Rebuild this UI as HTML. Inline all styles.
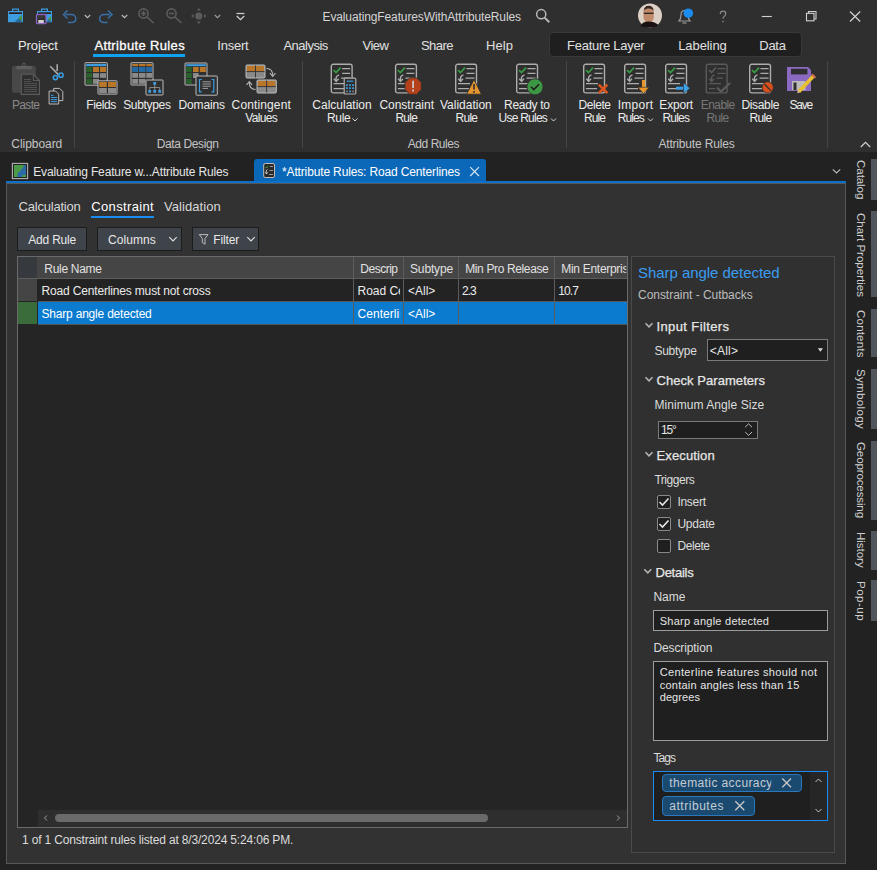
<!DOCTYPE html>
<html><head><meta charset="utf-8">
<style>
html,body{margin:0;padding:0;}
body{width:877px;height:870px;overflow:hidden;position:relative;background:#222222;font-family:"Liberation Sans",sans-serif;}
.t{position:absolute;white-space:pre;line-height:1;font-family:"Liberation Sans",sans-serif;}
.b{position:absolute;box-sizing:border-box;}
svg{position:absolute;overflow:visible;}
</style></head><body>
<!-- title bar + ribbon -->
<div class="b" style="left:0;top:0;width:877px;height:152px;background:#2f2f2f;"></div>
<!-- contextual tab box -->
<div class="b" style="left:549px;top:32px;width:253px;height:25px;background:#1f1f1f;border:1px solid #383838;border-radius:4px;"></div>
<!-- Attribute rules underline -->
<div class="b" style="left:93px;top:54px;width:92px;height:3px;background:#0ea2f0;"></div>
<!-- ribbon separators -->
<div class="b" style="left:74px;top:61px;width:1px;height:87px;background:#454545;"></div>
<div class="b" style="left:302px;top:61px;width:1px;height:87px;background:#454545;"></div>
<div class="b" style="left:566px;top:61px;width:1px;height:87px;background:#454545;"></div>
<div class="b" style="left:827px;top:61px;width:1px;height:87px;background:#454545;"></div>

<!-- doc tabs -->
<div class="b" style="left:254px;top:159px;width:232px;height:23px;background:#0b68b8;border-radius:3px 3px 0 0;"></div>
<div class="b" style="left:6px;top:181px;width:840px;height:2px;background:#0a72cc;"></div>
<!-- pane -->
<div class="b" style="left:6px;top:183px;width:840px;height:681px;background:#323232;border:1px solid #585858;"></div>

<!-- subtab underline -->
<div class="b" style="left:91px;top:216px;width:63px;height:2px;background:#1a8cf0;"></div>
<!-- buttons -->
<div class="b" style="left:17px;top:227px;width:70px;height:24px;background:#3f434a;border:1px solid #1c1c1c;"></div>
<div class="b" style="left:97px;top:227px;width:85px;height:24px;background:#3f434a;border:1px solid #1c1c1c;"></div>
<div class="b" style="left:192px;top:227px;width:67px;height:24px;background:#3f434a;border:1px solid #1c1c1c;"></div>

<!-- table -->
<div class="b" style="left:17px;top:256px;width:611px;height:572px;background:#252525;border:1px solid #6a6a6a;"></div>
<div class="b" style="left:18px;top:257px;width:609px;height:22px;background:#454545;border-bottom:1px solid #5c5c5c;"></div>
<div class="b" style="left:18px;top:257px;width:19px;height:21px;background:#363a3f;"></div>
<div class="b" style="left:353px;top:257px;width:1px;height:21px;background:#5c5c5c;"></div>
<div class="b" style="left:403px;top:257px;width:1px;height:21px;background:#5c5c5c;"></div>
<div class="b" style="left:458px;top:257px;width:1px;height:21px;background:#5c5c5c;"></div>
<div class="b" style="left:554px;top:257px;width:1px;height:21px;background:#5c5c5c;"></div>
<!-- row1 -->
<div class="b" style="left:18px;top:279px;width:19px;height:22px;background:#454545;"></div>
<div class="b" style="left:38px;top:279px;width:589px;height:22px;background:#232323;"></div>
<!-- row2 -->
<div class="b" style="left:18px;top:302px;width:19px;height:22px;background:#3a6b3a;"></div>
<div class="b" style="left:38px;top:301px;width:589px;height:1px;background:#555555;"></div>
<div class="b" style="left:38px;top:302px;width:589px;height:22px;background:#0a7bcf;"></div>
<div class="b" style="left:38px;top:324px;width:589px;height:1px;background:#555555;"></div>
<!-- cell separators -->
<div class="b" style="left:353px;top:279px;width:1px;height:46px;background:#5c5c5c;"></div>
<div class="b" style="left:403px;top:279px;width:1px;height:46px;background:#5c5c5c;"></div>
<div class="b" style="left:458px;top:279px;width:1px;height:46px;background:#5c5c5c;"></div>
<div class="b" style="left:554px;top:279px;width:1px;height:46px;background:#5c5c5c;"></div>
<!-- h scrollbar -->
<div class="b" style="left:38px;top:810px;width:589px;height:17px;background:#2e2e2e;"></div>
<div class="b" style="left:55px;top:814px;width:433px;height:8px;background:#6a6a6a;border-radius:4px;"></div>

<!-- right panel -->
<div class="b" style="left:631px;top:256px;width:204px;height:597px;background:#303030;border:1px solid #4a4a4a;"></div>
<!-- combo -->
<div class="b" style="left:707px;top:339px;width:121px;height:22px;background:#1f1f1f;border:1px solid #7a7a7a;"></div>
<!-- 15 box -->
<div class="b" style="left:658px;top:421px;width:100px;height:18px;background:#1f1f1f;border:1px solid #7a7a7a;"></div>
<!-- checkboxes -->
<div class="b" style="left:657px;top:495px;width:14px;height:14px;background:#1f1f1f;border:1px solid #8a8a8a;border-radius:2px;"></div>
<div class="b" style="left:657px;top:517px;width:14px;height:14px;background:#1f1f1f;border:1px solid #8a8a8a;border-radius:2px;"></div>
<div class="b" style="left:657px;top:539px;width:14px;height:14px;background:#1f1f1f;border:1px solid #8a8a8a;border-radius:2px;"></div>
<!-- name / desc -->
<div class="b" style="left:653px;top:610px;width:175px;height:21px;background:#1f1f1f;border:1px solid #9c9c9c;"></div>
<div class="b" style="left:653px;top:661px;width:175px;height:80px;background:#1f1f1f;border:1px solid #9c9c9c;"></div>
<!-- tags -->
<div class="b" style="left:653px;top:771px;width:175px;height:50px;background:#1f1f1f;border:1px solid #1a8cf0;"></div>
<div class="b" style="left:810px;top:772px;width:17px;height:48px;background:#262626;"></div>
<div class="b" style="left:662px;top:774px;width:140px;height:18px;background:#1b4a70;border:1px solid #2a78c0;border-radius:4px;"></div>
<div class="b" style="left:662px;top:796px;width:93px;height:20px;background:#1b4a70;border:1px solid #2a78c0;border-radius:4px;"></div>

<!-- sidebar bars -->
<div class="b" style="left:871px;top:159px;width:6px;height:41px;background:#51555c;"></div>
<div class="b" style="left:871px;top:211px;width:6px;height:86px;background:#51555c;"></div>
<div class="b" style="left:871px;top:309px;width:6px;height:48px;background:#51555c;"></div>
<div class="b" style="left:871px;top:369px;width:6px;height:60px;background:#51555c;"></div>
<div class="b" style="left:871px;top:441px;width:6px;height:79px;background:#51555c;"></div>
<div class="b" style="left:871px;top:531px;width:6px;height:39px;background:#51555c;"></div>
<div class="b" style="left:871px;top:580px;width:6px;height:41px;background:#51555c;"></div>

<div class="t" style="left:322.5px;top:11.14px;font-size:12px;letter-spacing:-0.122px;color:#d4d4d4;">EvaluatingFeaturesWithAttributeRules</div>
<div class="t" style="left:18.0px;top:38.60px;font-size:13px;letter-spacing:-0.111px;color:#e8e8e8;">Project</div>
<div class="t" style="left:94.4px;top:38.60px;font-size:13px;letter-spacing:0.360px;color:#ffffff;-webkit-text-stroke:0.3px #ffffff;">Attribute Rules</div>
<div class="t" style="left:217.3px;top:38.60px;font-size:13px;letter-spacing:-0.243px;color:#e0e0e0;">Insert</div>
<div class="t" style="left:283.4px;top:38.60px;font-size:13px;letter-spacing:-0.489px;color:#e0e0e0;">Analysis</div>
<div class="t" style="left:362.5px;top:38.60px;font-size:13px;letter-spacing:-0.484px;color:#e0e0e0;">View</div>
<div class="t" style="left:421.0px;top:38.60px;font-size:13px;letter-spacing:-0.551px;color:#e0e0e0;">Share</div>
<div class="t" style="left:486.0px;top:38.60px;font-size:13px;letter-spacing:0.083px;color:#e0e0e0;">Help</div>
<div class="t" style="left:567.1px;top:38.60px;font-size:13px;letter-spacing:-0.278px;color:#e0e0e0;">Feature Layer</div>
<div class="t" style="left:678.2px;top:38.60px;font-size:13px;letter-spacing:-0.079px;color:#e0e0e0;">Labeling</div>
<div class="t" style="left:759.3px;top:38.60px;font-size:13px;letter-spacing:-0.290px;color:#e0e0e0;">Data</div>
<div class="t" style="left:12.0px;top:99.14px;font-size:12px;letter-spacing:-0.672px;color:#8a8a8a;">Paste</div>
<div class="t" style="left:86.2px;top:99.14px;font-size:12px;letter-spacing:-0.383px;color:#ececec;">Fields</div>
<div class="t" style="left:123.2px;top:99.14px;font-size:12px;letter-spacing:-0.321px;color:#ececec;">Subtypes</div>
<div class="t" style="left:178.6px;top:99.14px;font-size:12px;letter-spacing:-0.160px;color:#ececec;">Domains</div>
<div class="t" style="left:231.6px;top:99.14px;font-size:12px;letter-spacing:0.128px;color:#ececec;">Contingent</div>
<div class="t" style="left:245.3px;top:111.64px;font-size:12px;letter-spacing:-0.662px;color:#ececec;">Values</div>
<div class="t" style="left:312.3px;top:99.14px;font-size:12px;letter-spacing:0.002px;color:#ececec;">Calculation</div>
<div class="t" style="left:327.0px;top:111.64px;font-size:12px;letter-spacing:-0.296px;color:#ececec;">Rule</div>
<div class="t" style="left:379.4px;top:99.14px;font-size:12px;letter-spacing:-0.011px;color:#ececec;">Constraint</div>
<div class="t" style="left:395.4px;top:111.64px;font-size:12px;letter-spacing:-0.696px;color:#ececec;">Rule</div>
<div class="t" style="left:440.0px;top:99.14px;font-size:12px;letter-spacing:-0.003px;color:#ececec;">Validation</div>
<div class="t" style="left:455.5px;top:111.64px;font-size:12px;letter-spacing:-0.729px;color:#ececec;">Rule</div>
<div class="t" style="left:504.0px;top:99.14px;font-size:12px;letter-spacing:-0.290px;color:#ececec;">Ready to</div>
<div class="t" style="left:498.6px;top:111.64px;font-size:12px;letter-spacing:-0.770px;color:#ececec;">Use Rules</div>
<div class="t" style="left:578.6px;top:99.14px;font-size:12px;letter-spacing:-0.458px;color:#ececec;">Delete</div>
<div class="t" style="left:583.9px;top:111.64px;font-size:12px;letter-spacing:-0.862px;color:#ececec;">Rule</div>
<div class="t" style="left:617.7px;top:99.14px;font-size:12px;letter-spacing:0.277px;color:#ececec;">Import</div>
<div class="t" style="left:617.7px;top:111.64px;font-size:12px;letter-spacing:-0.897px;color:#ececec;">Rules</div>
<div class="t" style="left:659.3px;top:99.14px;font-size:12px;letter-spacing:-0.158px;color:#ececec;">Export</div>
<div class="t" style="left:662.4px;top:111.64px;font-size:12px;letter-spacing:-0.772px;color:#ececec;">Rules</div>
<div class="t" style="left:700.8px;top:99.14px;font-size:12px;letter-spacing:-0.575px;color:#777777;">Enable</div>
<div class="t" style="left:706.4px;top:111.64px;font-size:12px;letter-spacing:-0.629px;color:#777777;">Rule</div>
<div class="t" style="left:741.5px;top:99.14px;font-size:12px;letter-spacing:-0.355px;color:#ececec;">Disable</div>
<div class="t" style="left:749.5px;top:111.64px;font-size:12px;letter-spacing:-0.629px;color:#ececec;">Rule</div>
<div class="t" style="left:789.5px;top:99.14px;font-size:12px;letter-spacing:-1.220px;color:#ececec;">Save</div>
<div class="t" style="left:11.3px;top:138.14px;font-size:12px;letter-spacing:-0.047px;color:#c4c4c4;">Clipboard</div>
<div class="t" style="left:156.7px;top:138.14px;font-size:12px;letter-spacing:-0.375px;color:#c4c4c4;">Data Design</div>
<div class="t" style="left:407.8px;top:138.14px;font-size:12px;letter-spacing:-0.459px;color:#c4c4c4;">Add Rules</div>
<div class="t" style="left:658.4px;top:138.14px;font-size:12px;letter-spacing:-0.172px;color:#c4c4c4;">Attribute Rules</div>
<div class="t" style="left:33.2px;top:165.54px;font-size:12px;letter-spacing:-0.148px;color:#e6e6e6;">Evaluating Feature w...Attribute Rules</div>
<div class="t" style="left:282.0px;top:165.54px;font-size:12px;letter-spacing:-0.144px;color:#ffffff;">*Attribute Rules: Road Centerlines</div>
<div class="t" style="left:18.6px;top:200.00px;font-size:13px;letter-spacing:-0.223px;color:#d8d8d8;">Calculation</div>
<div class="t" style="left:91.3px;top:200.00px;font-size:13px;letter-spacing:0.350px;color:#ffffff;">Constraint</div>
<div class="t" style="left:164.0px;top:200.00px;font-size:13px;letter-spacing:0.073px;color:#d8d8d8;">Validation</div>
<div class="t" style="left:28.3px;top:233.64px;font-size:12px;letter-spacing:-0.211px;color:#e8e8e8;">Add Rule</div>
<div class="t" style="left:108.0px;top:233.84px;font-size:12px;letter-spacing:0.073px;color:#e8e8e8;">Columns</div>
<div class="t" style="left:213.2px;top:233.84px;font-size:12px;letter-spacing:-0.134px;color:#e8e8e8;">Filter</div>
<div class="t" style="left:44.3px;top:262.84px;font-size:12px;letter-spacing:-0.291px;color:#e0e0e0;">Rule Name</div>
<div class="t" style="left:360.3px;top:262.84px;font-size:12px;letter-spacing:-0.498px;color:#e0e0e0;">Descrip</div>
<div class="t" style="left:410.0px;top:262.84px;font-size:12px;letter-spacing:-0.141px;color:#e0e0e0;">Subtype</div>
<div class="t" style="left:465.2px;top:262.84px;font-size:12px;letter-spacing:-0.366px;color:#e0e0e0;">Min Pro Release</div>
<div class="t" style="left:561.3px;top:262.84px;font-size:12px;letter-spacing:-0.298px;color:#e0e0e0;clip-path:inset(-5px calc(100% - 65px) -5px -5px);">Min Enterprise</div>
<div class="t" style="left:41.5px;top:285.04px;font-size:12px;letter-spacing:-0.163px;color:#ececec;">Road Centerlines must not cross</div>
<div class="t" style="left:357.6px;top:285.04px;font-size:12px;letter-spacing:-0.048px;color:#ececec;clip-path:inset(-5px calc(100% - 42.5px) -5px -5px);">Road Centerlines</div>
<div class="t" style="left:407.9px;top:285.04px;font-size:12px;letter-spacing:0.035px;color:#ececec;">&lt;All&gt;</div>
<div class="t" style="left:462.0px;top:285.04px;font-size:12px;letter-spacing:-0.944px;color:#ececec;">2.3</div>
<div class="t" style="left:558.2px;top:285.04px;font-size:12px;letter-spacing:-0.853px;color:#ececec;">10.7</div>
<div class="t" style="left:41.5px;top:307.84px;font-size:12px;letter-spacing:-0.200px;color:#ffffff;">Sharp angle detected</div>
<div class="t" style="left:357.6px;top:307.84px;font-size:12px;letter-spacing:0.033px;color:#ffffff;clip-path:inset(-5px calc(100% - 42.5px) -5px -5px);">Centerline</div>
<div class="t" style="left:407.9px;top:307.84px;font-size:12px;letter-spacing:0.035px;color:#ffffff;">&lt;All&gt;</div>
<div class="t" style="left:22.0px;top:834.44px;font-size:12px;letter-spacing:-0.166px;color:#dcdcdc;">1 of 1 Constraint rules listed at 8/3/2024 5:24:06 PM.</div>
<div class="t" style="left:638.0px;top:265.20px;font-size:15px;letter-spacing:-0.049px;color:#3a9cf0;">Sharp angle detected</div>
<div class="t" style="left:638.0px;top:289.34px;font-size:12px;letter-spacing:-0.035px;color:#bdbdbd;">Constraint - Cutbacks</div>
<div class="t" style="left:656.5px;top:320.40px;font-size:13px;letter-spacing:0.382px;color:#e6e6e6;-webkit-text-stroke:0.25px #e6e6e6;">Input Filters</div>
<div class="t" style="left:654.4px;top:345.14px;font-size:12px;letter-spacing:-0.241px;color:#dcdcdc;">Subtype</div>
<div class="t" style="left:709.7px;top:345.14px;font-size:12px;letter-spacing:0.235px;color:#e6e6e6;">&lt;All&gt;</div>
<div class="t" style="left:656.5px;top:374.00px;font-size:13px;letter-spacing:0.056px;color:#e6e6e6;-webkit-text-stroke:0.25px #e6e6e6;">Check Parameters</div>
<div class="t" style="left:654.4px;top:398.84px;font-size:12px;letter-spacing:0.069px;color:#dcdcdc;">Minimum Angle Size</div>
<div class="t" style="left:661.0px;top:424.34px;font-size:12px;letter-spacing:-1.178px;color:#e6e6e6;">15°</div>
<div class="t" style="left:656.5px;top:449.00px;font-size:13px;letter-spacing:0.138px;color:#e6e6e6;-webkit-text-stroke:0.25px #e6e6e6;">Execution</div>
<div class="t" style="left:654.4px;top:474.24px;font-size:12px;letter-spacing:-0.468px;color:#dcdcdc;">Triggers</div>
<div class="t" style="left:677.4px;top:495.84px;font-size:12px;letter-spacing:-0.283px;color:#dcdcdc;">Insert</div>
<div class="t" style="left:677.4px;top:518.04px;font-size:12px;letter-spacing:-0.221px;color:#dcdcdc;">Update</div>
<div class="t" style="left:677.4px;top:539.94px;font-size:12px;letter-spacing:-0.417px;color:#dcdcdc;">Delete</div>
<div class="t" style="left:655.5px;top:566.00px;font-size:13px;letter-spacing:-0.258px;color:#e6e6e6;-webkit-text-stroke:0.25px #e6e6e6;">Details</div>
<div class="t" style="left:653.4px;top:591.14px;font-size:12px;letter-spacing:0.028px;color:#dcdcdc;">Name</div>
<div class="t" style="left:659.7px;top:615.89px;font-size:11px;letter-spacing:0.248px;color:#e6e6e6;">Sharp angle detected</div>
<div class="t" style="left:653.4px;top:641.54px;font-size:12px;letter-spacing:-0.103px;color:#dcdcdc;">Description</div>
<div class="t" style="left:659.7px;top:666.59px;font-size:11px;letter-spacing:0.363px;color:#e6e6e6;">Centerline features should not</div>
<div class="t" style="left:659.7px;top:679.69px;font-size:11px;letter-spacing:0.241px;color:#e6e6e6;">contain angles less than 15</div>
<div class="t" style="left:659.7px;top:692.09px;font-size:11px;letter-spacing:0.089px;color:#e6e6e6;">degrees</div>
<div class="t" style="left:653.4px;top:751.84px;font-size:12px;letter-spacing:-0.953px;color:#dcdcdc;">Tags</div>
<div class="t" style="left:669.3px;top:776.84px;font-size:12px;letter-spacing:0.394px;color:#c4ccd4;clip-path:inset(-5px calc(100% - 102px) -5px -5px);">thematic accuracy</div>
<div class="t" style="left:669.3px;top:799.84px;font-size:12px;letter-spacing:0.527px;color:#c4ccd4;">attributes</div>
<div class="t" style="left:866.6px;top:160.00px;font-size:11.6px;letter-spacing:-0.095px;color:#cfcfcf;transform:rotate(90deg);transform-origin:0 0;">Catalog</div>
<div class="t" style="left:866.6px;top:212.60px;font-size:11.6px;letter-spacing:-0.028px;color:#cfcfcf;transform:rotate(90deg);transform-origin:0 0;">Chart Properties</div>
<div class="t" style="left:866.6px;top:309.50px;font-size:11.6px;letter-spacing:0.156px;color:#cfcfcf;transform:rotate(90deg);transform-origin:0 0;">Contents</div>
<div class="t" style="left:866.6px;top:369.30px;font-size:11.6px;letter-spacing:0.293px;color:#cfcfcf;transform:rotate(90deg);transform-origin:0 0;">Symbology</div>
<div class="t" style="left:866.6px;top:442.20px;font-size:11.6px;letter-spacing:-0.157px;color:#cfcfcf;transform:rotate(90deg);transform-origin:0 0;">Geoprocessing</div>
<div class="t" style="left:866.6px;top:532.30px;font-size:11.6px;letter-spacing:-0.063px;color:#cfcfcf;transform:rotate(90deg);transform-origin:0 0;">History</div>
<div class="t" style="left:866.6px;top:581.00px;font-size:11.6px;letter-spacing:0.462px;color:#cfcfcf;transform:rotate(90deg);transform-origin:0 0;">Pop-up</div>
<svg width="877" height="870" style="left:0;top:0;" viewBox="0 0 877 870" fill="none" stroke-linecap="butt">
<defs>
  <g id="rdoc">
    <rect x="0.7" y="0.7" width="20.8" height="28.6" rx="2" stroke="#adadad" stroke-width="1.4"/>
    <polyline points="3,6.5 5.5,9 10,4" stroke="#3a9c44" stroke-width="1.7"/>
    <path d="M11.5,5H19.5M11.5,9.8H19.5M10.5,14.5H19.5M3,20H15M3,25H14" stroke="#adadad" stroke-width="1.3"/>
    <path d="M8.5,11.3C5.8,12 5,14.5 5.6,17.5" stroke="#adadad" stroke-width="1.4"/>
    <path d="M3.3,15.2L5.6,17.8L8,15.2" stroke="#adadad" stroke-width="1.4"/>
  </g>
</defs>
<!-- ===== title bar ===== -->
<!-- project icon -->
<g>
  <rect x="12.6" y="9.1" width="5.8" height="2.6" stroke="#3d9de0" stroke-width="1.2"/>
  <rect x="8" y="11" width="15" height="11.2" fill="#3d9de0"/>
  <rect x="9" y="12.3" width="13" height="1.7" fill="#2b1f1f"/>
  <path d="M14.5,22.2L21.8,15V22.2Z" fill="#2a6a9a"/>
  <path d="M18.5,18L21.8,15V21Z" fill="#4a9a3a"/>
</g>
<!-- save project icon -->
<g>
  <rect x="41.6" y="9.1" width="5.8" height="2.6" stroke="#3d9de0" stroke-width="1.2"/>
  <rect x="37" y="11" width="15" height="11.2" fill="#3d9de0"/>
  <rect x="38" y="12.3" width="13" height="1.7" fill="#2b1f1f"/>
  <path d="M46,22.2L51,17V22.2Z" fill="#2a6a9a"/>
  <path d="M48,19L51,16V21Z" fill="#4a9a3a"/>
  <rect x="36.5" y="14.5" width="9.5" height="9.2" rx="1" fill="#2f2f2f" stroke="#8a63c0" stroke-width="1.3"/>
  <rect x="38.3" y="20" width="5.5" height="3" fill="#d0d0d0"/>
  <rect x="38.5" y="15.8" width="5" height="2.5" fill="#3a3a3a"/>
</g>
<!-- undo -->
<path d="M65.5,14.5H71.5C74,14.5 75.8,16.3 75.8,18.6C75.8,21 74,22.6 71.5,22.6H68" stroke="#3a70a8" stroke-width="1.5"/>
<path d="M67.5,10.5L63.5,14.5L67.5,18.5" stroke="#3a70a8" stroke-width="1.5"/>
<path d="M84.8,15L87.5,17.7L90.2,15" stroke="#bdbdbd" stroke-width="1.1"/>
<!-- redo -->
<path d="M110,14.5H104C101.5,14.5 99.7,16.3 99.7,18.6C99.7,21 101.5,22.6 104,22.6H107.5" stroke="#3a70a8" stroke-width="1.5"/>
<path d="M108,10.5L112,14.5L108,18.5" stroke="#3a70a8" stroke-width="1.5"/>
<path d="M121.8,15L124.5,17.7L127.2,15" stroke="#bdbdbd" stroke-width="1.1"/>
<!-- zoom in -->
<circle cx="143.5" cy="13.5" r="4.6" stroke="#5c5c5c" stroke-width="1.6"/>
<path d="M141,13.5H146M143.5,11V16M147,17L153.5,23" stroke="#5c5c5c" stroke-width="1.7"/>
<!-- zoom out -->
<circle cx="171.5" cy="13.5" r="4.6" stroke="#5c5c5c" stroke-width="1.6"/>
<path d="M169,13.5H174M175,17L181.5,23" stroke="#5c5c5c" stroke-width="1.7"/>
<!-- pan -->
<circle cx="198.8" cy="16" r="3.6" fill="#5c5c5c"/>
<path d="M198.8,8L196.8,10.6H200.8ZM198.8,24L196.8,21.4H200.8ZM191,16L193.6,14V18ZM206.6,16L204,14V18Z" fill="#5c5c5c"/>
<path d="M214.8,15L217.5,17.7L220.2,15" stroke="#9a9a9a" stroke-width="1.1"/>
<!-- customize -->
<path d="M236.5,13.5H244.5" stroke="#d0d0d0" stroke-width="1.2"/>
<path d="M236.8,16L240.5,19.7L244.2,16" stroke="#d0d0d0" stroke-width="1.3"/>
<!-- search -->
<circle cx="541.2" cy="14.2" r="4.6" stroke="#b8b8b8" stroke-width="1.5"/>
<path d="M544.6,17.6L549.3,22.2" stroke="#b8b8b8" stroke-width="2"/>
<!-- avatar -->
<circle cx="650" cy="15.6" r="12" fill="#dcd0c6"/>
<path d="M643.5,12C643.5,8 646,6 648.6,6C651.5,6 653.8,8 653.8,12V17C653.8,20.5 651.5,22.5 648.6,22.5C646,22.5 643.5,20.5 643.5,17Z" fill="#c08a6c"/>
<path d="M643.8,10.5C644,7.5 646,5.8 648.6,5.8C651.3,5.8 653.5,7.5 653.6,10.5C652,9 650,8.6 648.6,8.6C647,8.6 645.3,9 643.8,10.5Z" fill="#3a2620"/>
<path d="M643.8,13.3H653.6" stroke="#2a2020" stroke-width="1.3"/>
<path d="M640.5,26C642,23 644.5,21.6 648.6,21.6C652.5,21.6 655.5,22.5 658.5,25.2C656,27 653.2,27.6 650,27.6C646.5,27.6 643.5,27.2 640.5,26Z" fill="#1a1212"/>
<!-- bell -->
<path d="M679,21C680.5,19.5 681,18 681,15C681,12 682.5,10.5 684.5,10.5C686.5,10.5 688,12 688,15C688,18 688.5,19.5 690,21Z" stroke="#9a9a9a" stroke-width="1.2"/>
<path d="M682.5,23H686.5" stroke="#9a9a9a" stroke-width="1.2"/>
<circle cx="688.3" cy="13.2" r="4.8" fill="#1a8cf0"/>
<!-- question -->
<path d="M720.3,14C720.3,12 721.7,11.2 723,11.2C724.5,11.2 725.8,12.2 725.8,13.8C725.8,16 723,16.2 723,18.8" stroke="#8a8a8a" stroke-width="1.2"/>
<circle cx="723" cy="21.6" r="0.8" fill="#8a8a8a"/>
<!-- min/restore/close -->
<path d="M761.8,16.5H771.8" stroke="#d0d0d0" stroke-width="1.1"/>
<rect x="806.5" y="13.3" width="7.5" height="7.5" stroke="#d0d0d0" stroke-width="1.1"/>
<path d="M808.5,13.3V11.5H816V19H814" stroke="#d0d0d0" stroke-width="1.1"/>
<path d="M850,11.5L860.2,21.5M860.2,11.5L850,21.5" stroke="#d0d0d0" stroke-width="1.2"/>

<!-- ===== ribbon ===== -->
<!-- paste -->
<g>
  <rect x="12" y="65.8" width="23.8" height="27" rx="2.5" fill="#484848"/>
  <rect x="16.1" y="66" width="15.9" height="3.2" rx="1.6" fill="#5e5e5e"/>
  <circle cx="23.9" cy="64.6" r="1.5" stroke="#5e5e5e" stroke-width="1"/>
  <path d="M21.3,74.3H33.3L39.5,80.5V94.4H21.3Z" fill="#2f2f2f" stroke="#5c5c5c" stroke-width="1.1"/>
  <path d="M33.3,74.3V80.5H39.5" stroke="#5c5c5c" stroke-width="1"/>
  <path d="M24,79.5H31M24,81.5H31M24,83.5H37M24,85.5H37M24,87.5H37M24,89.5H37M24,91.5H37" stroke="#5a5a5a" stroke-width="0.8"/>
</g>
<!-- scissors -->
<g>
  <path d="M50.2,66.2L58.4,74.6" stroke="#a8a8a8" stroke-width="1.6"/>
  <path d="M57.2,64.3V71" stroke="#a8a8a8" stroke-width="1.6"/>
  <circle cx="55.4" cy="77.6" r="2.1" stroke="#3a9de0" stroke-width="1.5"/>
  <circle cx="61" cy="75.2" r="2.1" stroke="#3a9de0" stroke-width="1.5"/>
</g>
<!-- copy -->
<g>
  <path d="M53.6,88.4H59.6L62.8,91.6V100.6H53.6Z" fill="#2f2f2f" stroke="#bcbcbc" stroke-width="1"/>
  <path d="M49.1,91H55.5L58.7,94.2V104H49.1Z" fill="#2f2f2f" stroke="#bcbcbc" stroke-width="1"/>
  <path d="M51,95.4H53.5M51,97.5H57M51,99.6H57M51,101.6H57" stroke="#3a9de0" stroke-width="1"/>
</g>
<!-- fields -->
<g>
  <rect x="85" y="62.7" width="22.3" height="22.5" rx="0.6" fill="#2f2f2f" stroke="#bcbcbc" stroke-width="1"/>
  <rect x="86.2" y="64" width="20" height="2.2" fill="#3d9de0"/>
  <rect x="86.2" y="67" width="6" height="5" fill="#2a602c"/>
  <rect x="93" y="67" width="6" height="5" fill="#b97528"/>
  <rect x="100" y="67" width="6" height="5" fill="#b97528"/>
  <rect x="86.2" y="73.2" width="6" height="4.6" fill="#2a602c"/>
  <rect x="93" y="73.2" width="6" height="4.6" fill="#8a8a8a"/>
  <rect x="100" y="73.2" width="6" height="4.6" fill="#8a8a8a"/>
  <rect x="86.2" y="79" width="6" height="4.8" fill="#2a602c"/>
  <rect x="93" y="79" width="6" height="4.8" fill="#8a8a8a"/>
  <rect x="98" y="80.8" width="19" height="13.3" rx="0.6" fill="#2f2f2f" stroke="#bcbcbc" stroke-width="1"/>
  <rect x="99.2" y="82" width="7.6" height="5" fill="#b97528"/>
  <rect x="108" y="82" width="8" height="5" fill="#b97528"/>
  <rect x="99.2" y="88" width="7.6" height="5" fill="#8a8a8a"/>
  <rect x="108" y="88" width="8" height="5" fill="#8a8a8a"/>
</g>
<!-- subtypes -->
<g>
  <rect x="131" y="62.7" width="22" height="22.3" rx="0.6" fill="#2f2f2f" stroke="#bcbcbc" stroke-width="1"/>
  <rect x="132.2" y="64" width="6" height="2.2" fill="#b97528"/>
  <rect x="139" y="64" width="6.5" height="2.2" fill="#b97528"/>
  <rect x="146.3" y="64" width="5.8" height="2.2" fill="#b97528"/>
  <rect x="132.2" y="67" width="6" height="5" fill="#236aa5"/>
  <rect x="139" y="67" width="6.5" height="5" fill="#236aa5"/>
  <rect x="146.3" y="67" width="5.8" height="5" fill="#236aa5"/>
  <rect x="132.2" y="73" width="6" height="4.8" fill="#8a8a8a"/>
  <rect x="139" y="73" width="6.5" height="4.8" fill="#8a8a8a"/>
  <rect x="146.3" y="73" width="5.8" height="4.8" fill="#8a8a8a"/>
  <rect x="132.2" y="79" width="6" height="4.8" fill="#8a8a8a"/>
  <rect x="139" y="79" width="6.5" height="4.8" fill="#8a8a8a"/>
  <rect x="146" y="80" width="17" height="15" rx="0.6" fill="#2f2f2f" stroke="#bcbcbc" stroke-width="1"/>
  <rect x="153.3" y="82" width="2.8" height="2.8" fill="#3d9de0"/>
  <path d="M154.7,84.8V87.5M149.7,90V87.5H159.7V90M154.7,87.5V90" stroke="#9a9a9a" stroke-width="0.8"/>
  <rect x="148.3" y="90" width="2.8" height="2.8" fill="#3d9de0"/>
  <rect x="153.3" y="90" width="2.8" height="2.8" fill="#3d9de0"/>
  <rect x="158.3" y="90" width="2.8" height="2.8" fill="#3d9de0"/>
</g>
<!-- domains -->
<g>
  <rect x="185" y="63" width="22" height="22" rx="0.6" fill="#2f2f2f" stroke="#bcbcbc" stroke-width="1"/>
  <rect x="186.2" y="64.2" width="19.6" height="2" fill="#3d9de0"/>
  <rect x="186.2" y="67" width="5.6" height="5" fill="#2a602c"/>
  <rect x="193" y="67" width="5.6" height="5" fill="#b97528"/>
  <rect x="199.8" y="67" width="6" height="5" fill="#b97528"/>
  <rect x="186.2" y="73" width="5.6" height="5" fill="#2a602c"/>
  <rect x="193" y="73" width="5.6" height="5" fill="#8a8a8a"/>
  <rect x="186.2" y="79" width="5.6" height="5" fill="#2a602c"/>
  <rect x="196" y="76" width="21.3" height="19.2" rx="0.6" fill="#2f2f2f" stroke="#bcbcbc" stroke-width="1"/>
  <path d="M201.8,79.5H199.5V91.8H201.8M211.5,79.5H213.8V91.8H211.5" stroke="#3d9de0" stroke-width="1.2"/>
  <path d="M202.5,81.8H210.8M202.5,84H210.8M202.5,86.2H210.8M202.5,88.4H208" stroke="#bcbcbc" stroke-width="0.8"/>
</g>
<!-- contingent values -->
<g>
  <rect x="246" y="65" width="19" height="13" rx="1" fill="#8a8a8a" stroke="#bcbcbc" stroke-width="1"/>
  <rect x="247" y="66" width="8" height="5.3" fill="#b97528"/>
  <rect x="256" y="66" width="8" height="5.3" fill="#b97528"/>
  <path d="M246.5,71.6H264.5M255.5,65.5V77.5" stroke="#2f2f2f" stroke-width="0.9"/>
  <rect x="257" y="80" width="19.3" height="13" rx="1" fill="#8a8a8a" stroke="#bcbcbc" stroke-width="1"/>
  <rect x="258" y="81" width="8.2" height="5.3" fill="#b97528"/>
  <rect x="267" y="81" width="8.3" height="5.3" fill="#b97528"/>
  <path d="M257.5,86.6H275.8M266.6,80.5V92.5" stroke="#2f2f2f" stroke-width="0.9"/>
  <path d="M266.5,68.5C270.5,68.5 272.7,71 272.7,75.5" stroke="#bcbcbc" stroke-width="1.1"/>
  <path d="M270,73.2L272.7,76.5L275.4,73.2" stroke="#bcbcbc" stroke-width="1.1"/>
  <path d="M255.5,89.5C251.5,89.5 249.3,87 249.3,82.5" stroke="#bcbcbc" stroke-width="1.1"/>
  <path d="M246.6,84.8L249.3,81.5L252,84.8" stroke="#bcbcbc" stroke-width="1.1"/>
</g>
<!-- rule docs -->
<use href="#rdoc" x="330.6" y="63.6"/>
<use href="#rdoc" x="394.9" y="63.6"/>
<use href="#rdoc" x="455" y="63.6"/>
<use href="#rdoc" x="516" y="63.6"/>
<use href="#rdoc" x="583" y="63.6"/>
<use href="#rdoc" x="624" y="63.6"/>
<use href="#rdoc" x="665" y="63.6"/>
<use href="#rdoc" x="749" y="63.6"/>
<!-- calculator -->
<g>
  <rect x="344.2" y="78.2" width="11.6" height="15.8" rx="1" fill="#2f2f2f" stroke="#adadad" stroke-width="1.2"/>
  <path d="M346.8,81.2H353.2" stroke="#3d9de0" stroke-width="1.2"/>
  <path d="M346,84.2h1.8v1.8h-1.8zM349.1,84.2h1.8v1.8h-1.8zM352.2,84.2h1.8v1.8h-1.8zM346,87.3h1.8v1.8h-1.8zM349.1,87.3h1.8v1.8h-1.8zM352.2,87.3h1.8v1.8h-1.8zM349.1,90.4h1.8v1.8h-1.8z" fill="#3d9de0"/>
  <path d="M346,90.4h1.8v1.8h-1.8zM352.2,90.4h1.8v1.8h-1.8z" fill="#7a7a7a"/>
</g>
<!-- constraint octagon -->
<g>
  <path d="M409.8,77.8H416.5L421.3,82.6V89.6L416.5,94.4H409.8L405,89.6V82.6Z" fill="#b5401a" stroke="#2f2f2f" stroke-width="0.8"/>
  <path d="M413.1,80.8V88" stroke="#c8c8c8" stroke-width="1.8"/>
  <path d="M413.1,89.6V91.6" stroke="#c8c8c8" stroke-width="1.8"/>
</g>
<!-- validation triangle -->
<g>
  <path d="M474,79.6L481.4,94.2H466.6Z" fill="#e49530" stroke="#2f2f2f" stroke-width="0.8" stroke-linejoin="round"/>
  <path d="M474,84V89.5M474,91V92.8" stroke="#2f2f2f" stroke-width="1.6"/>
</g>
<!-- ready to use -->
<g>
  <circle cx="535" cy="86.8" r="8" fill="#3d9845" stroke="#2f2f2f" stroke-width="0.8"/>
  <path d="M531,86.8L533.8,89.6L539,84.2" stroke="#1e1e1e" stroke-width="1.6"/>
</g>
<!-- delete X -->
<path d="M598.8,84.6L607.4,93.2M607.4,84.6L598.8,93.2" stroke="#e0561c" stroke-width="2.5"/>
<!-- import arrow -->
<g>
  <path d="M643.5,80V90" stroke="#e8962a" stroke-width="3"/>
  <path d="M637.8,87.3L643.5,93.6L649.2,87.3Z" fill="#e8962a" stroke="#2f2f2f" stroke-width="0.6"/>
</g>
<!-- export arrow -->
<g>
  <path d="M676,88.2H685" stroke="#3aa0e8" stroke-width="3"/>
  <path d="M683.5,82.6L690,88.2L683.5,93.8Z" fill="#3aa0e8" stroke="#2f2f2f" stroke-width="0.6"/>
</g>
<!-- enable (disabled) -->
<g>
  <rect x="706.3" y="64.3" width="20.8" height="28.6" rx="2" stroke="#5a5a5a" stroke-width="1.4"/>
  <polyline points="709,70 711.5,72.5 716,67.5" stroke="#5a5a5a" stroke-width="1.7"/>
  <path d="M717.5,68.6H725.5M717.5,73.4H725.5M716.5,78.1H723M709,83.6H721M709,88.6H715" stroke="#5a5a5a" stroke-width="1.4"/>
  <path d="M714.5,74.9C711.8,75.6 711,78.1 711.6,81.1" stroke="#5a5a5a" stroke-width="1.4"/>
  <path d="M709.3,78.8L711.6,81.4L714,78.8" stroke="#5a5a5a" stroke-width="1.4"/>
  <path d="M717,87.5L721,91.5L730,83" stroke="#5a5a5a" stroke-width="2.4"/>
</g>
<!-- disable -->
<g>
  <circle cx="767.7" cy="87.4" r="5.6" fill="#d9501c" stroke="#2f2f2f" stroke-width="0.8"/>
  <path d="M764.5,84.2L770.9,90.6" stroke="#2f2f2f" stroke-width="1.3"/>
</g>
<!-- save -->
<g>
  <path d="M787,67H808L811,70V91H787Z" fill="#8a6ac0"/>
  <rect x="791" y="68.8" width="16.4" height="5.6" fill="#2f2f2f"/>
  <rect x="792" y="81" width="13.4" height="9.2" fill="#bcbcbc"/>
  <rect x="793.5" y="82.5" width="3" height="7.7" fill="#2f2f2f"/>
  <path d="M813.5,76L799,91.5" stroke="#e8c030" stroke-width="3.6"/>
  <path d="M811.8,74.2L815.4,77.8" stroke="#d07050" stroke-width="2.2"/>
  <path d="M797.2,93.2L798,90L800.4,92.3Z" fill="#e8c8a0"/>
</g>
<!-- ribbon chevrons -->
<path d="M352.5,118.5L355,121L357.5,118.5" stroke="#d8d8d8" stroke-width="1"/>
<path d="M551,118.5L553.5,121L556,118.5" stroke="#d8d8d8" stroke-width="1"/>
<path d="M648,118.5L650.5,121L653,118.5" stroke="#d8d8d8" stroke-width="1"/>
<!-- collapse ribbon chevron -->
<path d="M860.8,147L865.5,142.3L870.2,147" stroke="#d0d0d0" stroke-width="1.2"/>

<!-- ===== doc tabs ===== -->
<g>
  <rect x="12.4" y="163.4" width="15.2" height="15.2" stroke="#b4b4b4" stroke-width="1.1"/>
  <rect x="14" y="165" width="12" height="12" fill="#4a9a48"/>
  <path d="M24,165H26V177H17.5C17,175 18.5,173.5 18,172.5C19.5,172 20.5,171 21,169.5C22.5,168.5 23.5,167 24,165Z" fill="#2a6aa6"/>
  <path d="M21.5,177C22,175 24.5,174.5 26,175V177Z" fill="#4a9a48"/>
</g>
<g>
  <rect x="263.7" y="163.5" width="10.8" height="14" rx="1.5" fill="#2a2a2a" stroke="#c4bcb4" stroke-width="1"/>
  <path d="M265.5,167L266.5,168L268.2,166" stroke="#4ab040" stroke-width="0.9"/>
  <path d="M270,166.5H273M269.5,170.5H273M269,174.5H273" stroke="#a8a8a8" stroke-width="0.9"/>
  <path d="M267.5,169.5C266,170 266,171.5 266.5,173.5M265.3,172.3L266.5,174L267.8,172.3" stroke="#d8d8d8" stroke-width="0.9"/>
</g>
<path d="M470.2,167.2L479,176M479,167.2L470.2,176" stroke="#d8e6f4" stroke-width="1.2"/>
<path d="M832.8,169.3L836.5,173L840.2,169.3" stroke="#bdbdbd" stroke-width="1.1"/>

<!-- ===== pane ===== -->
<path d="M169.3,237.2L173,240.9L176.7,237.2" stroke="#e0e0e0" stroke-width="1.2"/>
<path d="M247.3,237.2L251,240.9L254.7,237.2" stroke="#e0e0e0" stroke-width="1.2"/>
<path d="M199.3,234.6H208L205,238.5V244.2L202.3,242.5V238.5Z" stroke="#bdbdbd" stroke-width="1" stroke-linejoin="round"/>
<!-- h scroll arrows -->
<path d="M47,815.5L44.5,818L47,820.5" stroke="#9a9a9a" stroke-width="1"/>
<path d="M617,815.5L619.5,818L617,820.5" stroke="#9a9a9a" stroke-width="1"/>

<!-- ===== right panel ===== -->
<path d="M645.5,323.3L649,326.8L652.5,323.3" stroke="#b4b4b4" stroke-width="1.6"/>
<path d="M645.5,377.3L649,380.8L652.5,377.3" stroke="#b4b4b4" stroke-width="1.6"/>
<path d="M645.5,452.3L649,455.8L652.5,452.3" stroke="#b4b4b4" stroke-width="1.6"/>
<path d="M644.3,569.3L647.8,572.8L651.3,569.3" stroke="#b4b4b4" stroke-width="1.6"/>
<path d="M817.8,348.2H823L820.4,351.8Z" fill="#d8d8d8"/>
<path d="M745.2,427.2L748.6,423.8L752,427.2M745.2,432L748.6,435.4L752,432" stroke="#bdbdbd" stroke-width="1"/>
<path d="M659.5,502L662.5,505L668.5,498.5" stroke="#e6e6e6" stroke-width="1.6"/>
<path d="M659.5,524L662.5,527L668.5,520.5" stroke="#e6e6e6" stroke-width="1.6"/>
<path d="M782.3,778.5L791,787.2M791,778.5L782.3,787.2" stroke="#c8c8c8" stroke-width="1.3"/>
<path d="M735.3,801.3L744.3,810.3M744.3,801.3L735.3,810.3" stroke="#c8c8c8" stroke-width="1.3"/>
<path d="M815.5,782L818.5,779L821.5,782" stroke="#c8c8c8" stroke-width="1"/>
<path d="M815.5,809L818.5,812L821.5,809" stroke="#c8c8c8" stroke-width="1"/>
</svg>

</body></html>
